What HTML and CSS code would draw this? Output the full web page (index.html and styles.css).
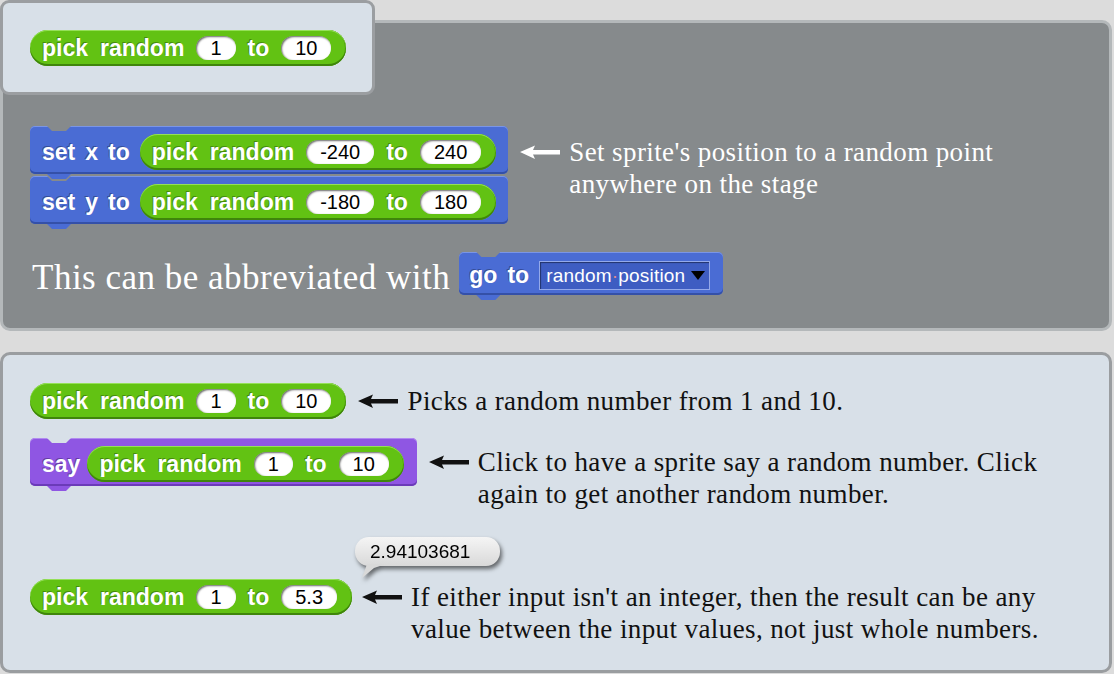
FILE: index.html
```html
<!DOCTYPE html>
<html lang="en">
<head>
<meta charset="utf-8">
<title>pick random</title>
<link rel="stylesheet" href="styles.css">
</head>
<body>
<div class="page">
  <div class="tab">
    <div class="rep"><span class="lbl">pick</span><span class="lbl">random</span><span class="slot">1</span><span class="lbl">to</span><span class="slot">10</span></div>
  </div>

  <section class="panel panel-dark">
    <div class="row">
      <div class="stack">
        <div class="cmd motion"><span class="lbl">set</span><span class="lbl">x</span><span class="lbl">to</span>
          <div class="rep"><span class="lbl">pick</span><span class="lbl">random</span><span class="slot">-240</span><span class="lbl">to</span><span class="slot">240</span></div>
        </div>
        <div class="cmd motion"><span class="lbl">set</span><span class="lbl">y</span><span class="lbl">to</span>
          <div class="rep"><span class="lbl">pick</span><span class="lbl">random</span><span class="slot">-180</span><span class="lbl">to</span><span class="slot">180</span></div>
        </div>
      </div>
      <div class="note note-top">
        <svg class="arrow" viewBox="0 0 40 32" width="40" height="32"><path d="M0 16 L15 9.5 L13 14 L40 14 L40 18.5 L13 18.5 L15 23 Z" fill="currentColor"/></svg>
        <p>Set sprite's position to a random point<br>anywhere on the stage</p>
      </div>
    </div>
    <div class="abbrev">
      <span class="big">This can be abbreviated with</span>
      <div class="cmd motion goto"><span class="lbl">go</span><span class="lbl">to</span>
        <div class="drop"><span>random<span class="dot">·</span>position</span><span class="tri"></span></div>
      </div>
    </div>
  </section>

  <section class="panel panel-light">
    <div class="row r1">
      <div class="rep"><span class="lbl">pick</span><span class="lbl">random</span><span class="slot">1</span><span class="lbl">to</span><span class="slot">10</span></div>
      <div class="note note-rep">
        <svg class="arrow" viewBox="0 0 40 32" width="40" height="32"><path d="M0 16 L15 9.5 L13 14 L40 14 L40 18.5 L13 18.5 L15 23 Z" fill="currentColor"/></svg>
        <p>Picks a random number from 1 and 10.</p>
      </div>
    </div>
    <div class="row r2">
      <div class="cmd looks say"><span class="lbl">say</span>
        <div class="rep"><span class="lbl">pick</span><span class="lbl">random</span><span class="slot">1</span><span class="lbl">to</span><span class="slot">10</span></div>
      </div>
      <div class="note note-cmd">
        <svg class="arrow" viewBox="0 0 40 32" width="40" height="32"><path d="M0 16 L15 9.5 L13 14 L40 14 L40 18.5 L13 18.5 L15 23 Z" fill="currentColor"/></svg>
        <p>Click to have a sprite say a random number. Click<br>again to get another random number.</p>
      </div>
    </div>
    <div class="row r3">
      <div class="bubble">2.94103681</div>
      <div class="rep"><span class="lbl">pick</span><span class="lbl">random</span><span class="slot">1</span><span class="lbl">to</span><span class="slot">5.3</span></div>
      <div class="note note-rep note-r3">
        <svg class="arrow" viewBox="0 0 40 32" width="40" height="32"><path d="M0 16 L15 9.5 L13 14 L40 14 L40 18.5 L13 18.5 L15 23 Z" fill="currentColor"/></svg>
        <p>If either input isn't an integer, then the result can be any<br>value between the input values, not just whole numbers.</p>
      </div>
    </div>
  </section>
</div>
</body>
</html>
```

FILE: styles.css
```css
* { box-sizing: border-box; }
html, body { margin: 0; padding: 0; }
body {
  background: #dcdcdc;
  width: 1114px;
  height: 674px;
  overflow: hidden;
  font-family: "Liberation Serif", "Times New Roman", serif;
}

/* ---------- containers ---------- */
.tab {
  position: relative;
  z-index: 3;
  width: 375px;
  height: 95px;
  background: #d8e0e8;
  border: 3px solid #9b9ea1;
  border-radius: 9px;
  padding: 27px 0 0 27px;
  --bg: #d8e0e8;
}
.panel {
  width: 1112px;
  border: 3px solid;
  border-radius: 10px;
}
.panel-dark {
  margin-top: -75px;
  height: 311px;
  background: #868a8c;
  border-color: #b4b8ba;
  padding: 103px 0 0 27px;
  color: #fff;
  --bg: #868a8c;
}
.panel-light {
  margin-top: 21px;
  height: 321px;
  background: #d8e0e8;
  border-color: #9a9da0;
  padding: 28px 0 0 27px;
  color: #111;
  --bg: #d8e0e8;
}

.row { display: flex; align-items: flex-start; }
.r2 { margin-top: 19px; }
.r3 { margin-top: 69px; position: relative; }

.stack { display: flex; flex-direction: column; gap: 2px; }
.stack .cmd:first-child { z-index: 2; }

/* ---------- notes ---------- */
.note { display: flex; align-items: flex-start; margin-left: 12px; }
.note-top { margin-top: 10px; }
.note-rep { margin-top: 2px; }
.note-cmd { margin-top: 8px; }
.note-r3 { margin-left: 10px; }
.arrow { flex: none; display: block; }
.note p {
  margin: 0 0 0 9px;
  font-size: 27px;
  line-height: 32px;
  letter-spacing: 0.4px;
  white-space: nowrap;
}

.abbrev { display: flex; align-items: flex-start; margin-top: 28px; padding-left: 2px; }
.big {
  font-size: 35px;
  line-height: 52px;
  letter-spacing: 0.5px;
  white-space: nowrap;
  margin-right: 9px;
}

/* ---------- blocks ---------- */
.lbl {
  color: #fff;
  font: bold 23px/1 "Liberation Sans", Arial, sans-serif;
  text-shadow: -1px -1px 0 rgba(0, 0, 0, 0.3);
  white-space: nowrap;
}
.slot {
  display: inline-flex;
  align-items: center;
  height: 24px;
  padding: 0 14px;
  border-radius: 12px;
  background: #fff;
  color: #000;
  font: 20px/1 "Liberation Sans", Arial, sans-serif;
  box-shadow: inset 1px 1px 2px rgba(0, 0, 0, 0.6), inset -1px -1px 1px rgba(255, 255, 255, 0.8);
  white-space: nowrap;
}
.rep {
  flex: none;
  display: inline-flex;
  align-items: center;
  gap: 12px;
  height: 36px;
  padding: 0 15px 0 12px;
  border-radius: 18px;
  background: #62c213;
  box-shadow: inset 0 1px 0 #95e058, inset 0 -2px 0 #3f850b, inset -1px 0 0 #4c9a10;
}

.cmd {
  --blk: #4a6cd4;
  position: relative;
  flex: none;
  display: inline-flex;
  align-items: center;
  gap: 10px;
  height: 48px;
  padding: 8px 12px 4px 12px;
  border-radius: 5px;
  background: var(--blk);
}
.cmd::before,
.cmd::after {
  content: "";
  position: absolute;
  left: 17px;
  width: 24px;
  height: 5px;
  clip-path: polygon(0 0, 100% 0, calc(100% - 5px) 100%, 5px 100%);
}
.cmd::before { top: 0; background: var(--bg); }
.cmd::after { top: 100%; background: var(--blk); }

.motion {
  --blk: #4a6cd4;
  box-shadow: inset 0 1px 0 #7a95e6, inset 0 -2px 0 #3450a8;
}
.looks {
  --blk: #8f56e3;
  box-shadow: inset 0 1px 0 #b18af0, inset 0 -2px 0 #6b3bb8;
}
.say { gap: 7px; padding-right: 13px; }

.goto {
  height: 43px;
  padding: 9px 13px 5px 10px;
}
.drop {
  display: flex;
  align-items: center;
  width: 171px;
  height: 29px;
  padding: 0 4px 0 6px;
  background: #3e5dc2;
  border: 1px solid #94a9ea;
  box-shadow: inset 1px 1px 1px rgba(0, 0, 0, 0.45);
  color: #fff;
  font: 19px/1 "Liberation Sans", Arial, sans-serif;
  letter-spacing: 0.2px;
  white-space: nowrap;
}
.dot { color: #e28b8b; }
.tri {
  margin-left: auto;
  width: 0;
  height: 0;
  border-left: 7px solid transparent;
  border-right: 7px solid transparent;
  border-top: 9px solid #000;
}

/* ---------- speech bubble ---------- */
.bubble {
  position: absolute;
  left: 325px;
  top: -42px;
  width: 145px;
  height: 29px;
  border-radius: 14px;
  background: linear-gradient(#f5f5f5, #d9d9d9);
  filter: drop-shadow(2px 3px 2px rgba(0, 0, 0, 0.55));
  display: flex;
  align-items: center;
  padding-left: 15px;
  color: #000;
  font: 19px/1 "Liberation Sans", Arial, sans-serif;
}
.bubble::after {
  content: "";
  position: absolute;
  left: 5px;
  top: 27px;
  width: 26px;
  height: 14px;
  background: #d9d9d9;
  clip-path: polygon(2px 100%, 7px 0, 26px 0, 14px 4px);
}
```
